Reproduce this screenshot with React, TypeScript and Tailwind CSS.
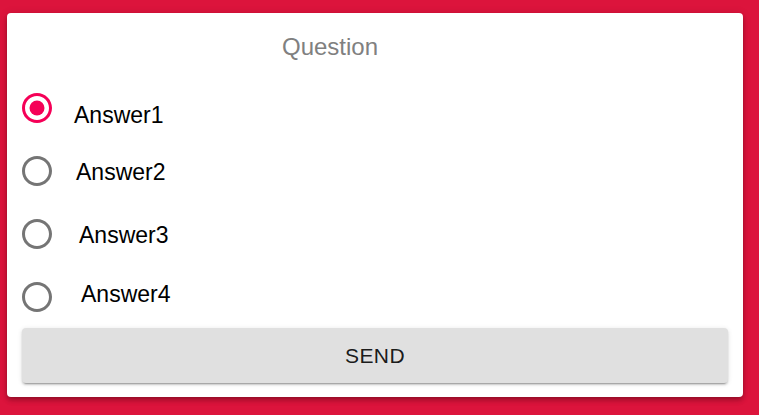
type Answer = {
    label: string;
    checked?: boolean;
    labelClass: string;
};

const answers: Answer[] = [
    { label: "Answer1", checked: true, labelClass: "ml-[19px] mt-[15px]" },
    { label: "Answer2", labelClass: "ml-[21px] mt-[3px]" },
    { label: "Answer3", labelClass: "ml-[24px] mt-[4px]" },
    { label: "Answer4", labelClass: "ml-[26px] -mt-[5px]" },
];

function RadioIcon({ checked }: { checked?: boolean }) {
    return (
        <svg
            viewBox="0 0 24 24"
            className={`h-9 w-9 shrink-0 ${checked ? "fill-[#f50057]" : "fill-[#757575]"}`}
        >
            <path d="M12 2C6.48 2 2 6.48 2 12s4.48 10 10 10 10-4.48 10-10S17.52 2 12 2zm0 18c-4.42 0-8-3.58-8-8s3.58-8 8-8 8 3.58 8 8-3.58 8-8 8z" />
            {checked && <circle cx="12" cy="12" r="5" />}
        </svg>
    );
}

export default function App() {
    return (
        <div className="min-h-screen bg-[#dc143c] pb-[18px] pl-[7px] pr-[16px] pt-[13px] font-['Liberation_Sans',Arial,sans-serif]">
            <div className="flex flex-col rounded bg-white pb-[14px] pl-[12px] pr-[15px] shadow-[0_2px_4px_-1px_rgba(0,0,0,0.2),0_4px_5px_0_rgba(0,0,0,0.14),0_1px_10px_0_rgba(0,0,0,0.12)]">
                {/* pergunta */}
                <div className="flex h-[63px] w-[622px] items-center justify-center pt-[5px]">
                    <h2 className="text-2xl leading-none font-normal text-[#808080]">
                        Question
                    </h2>
                </div>

                {/* respostas */}
                {answers.map((answer) => (
                    <label key={answer.label} className="flex h-[63px] items-center">
                        <RadioIcon checked={answer.checked} />
                        <span className={`text-[23px] leading-none text-black ${answer.labelClass}`}>
                            {answer.label}
                        </span>
                    </label>
                ))}

                {/* botão */}
                <button className="ml-[3px] h-[55px] rounded bg-[#e0e0e0] text-[21px] tracking-[0.02em] text-black/90 shadow-[0_3px_1px_-2px_rgba(0,0,0,0.2),0_2px_2px_0_rgba(0,0,0,0.14),0_1px_5px_0_rgba(0,0,0,0.12)]">
                    SEND
                </button>
            </div>
        </div>
    );
}
